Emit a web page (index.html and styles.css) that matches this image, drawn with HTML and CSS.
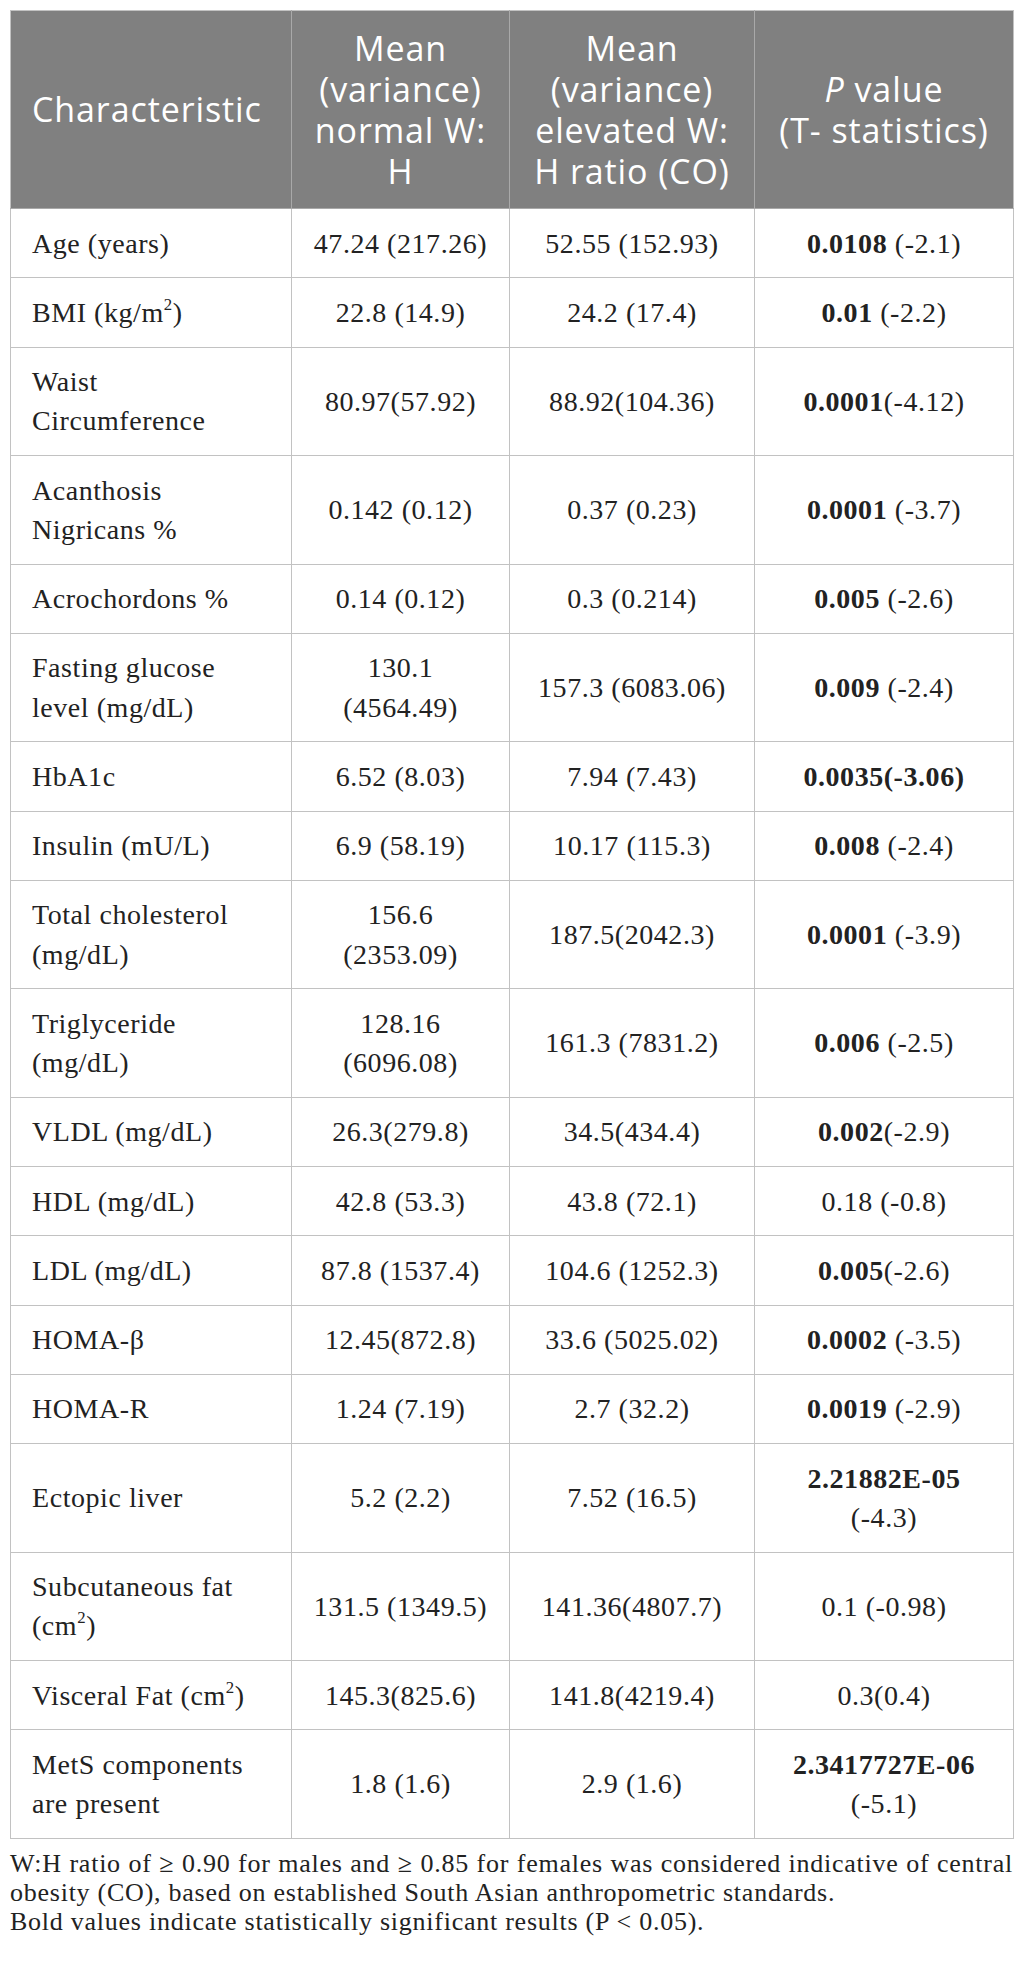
FILE: index.html
```html
<!DOCTYPE html>
<html lang="en">
<head>
<meta charset="utf-8">
<title>Characteristics by W:H ratio</title>
<link rel="stylesheet" href="styles.css">
</head>
<body>
<div class="wrap">
<table class="data">
  <colgroup>
    <col class="c1"><col class="c2"><col class="c3"><col class="c4">
  </colgroup>
  <thead>
    <tr>
      <th class="left">Characteristic</th>
      <th>Mean<br>(variance)<br>normal W:<br>H</th>
      <th>Mean<br>(variance)<br>elevated W:<br>H ratio (CO)</th>
      <th><i>P</i> value<br>(T- statistics)</th>
    </tr>
  </thead>
  <tbody>
    <tr><td class="left">Age (years)</td><td>47.24 (217.26)</td><td>52.55 (152.93)</td><td><b>0.0108</b> (-2.1)</td></tr>
    <tr><td class="left">BMI (kg/m<sup>2</sup>)</td><td>22.8 (14.9)</td><td>24.2 (17.4)</td><td><b>0.01</b> (-2.2)</td></tr>
    <tr><td class="left">Waist<br>Circumference</td><td>80.97(57.92)</td><td>88.92(104.36)</td><td><b>0.0001</b>(-4.12)</td></tr>
    <tr><td class="left">Acanthosis<br>Nigricans %</td><td>0.142 (0.12)</td><td>0.37 (0.23)</td><td><b>0.0001</b> (-3.7)</td></tr>
    <tr><td class="left">Acrochordons %</td><td>0.14 (0.12)</td><td>0.3 (0.214)</td><td><b>0.005</b> (-2.6)</td></tr>
    <tr><td class="left">Fasting glucose<br>level (mg/dL)</td><td>130.1<br>(4564.49)</td><td>157.3 (6083.06)</td><td><b>0.009</b> (-2.4)</td></tr>
    <tr><td class="left">HbA1c</td><td>6.52 (8.03)</td><td>7.94 (7.43)</td><td><b>0.0035(-3.06)</b></td></tr>
    <tr><td class="left">Insulin (mU/L)</td><td>6.9 (58.19)</td><td>10.17 (115.3)</td><td><b>0.008</b> (-2.4)</td></tr>
    <tr><td class="left">Total cholesterol<br>(mg/dL)</td><td>156.6<br>(2353.09)</td><td>187.5(2042.3)</td><td><b>0.0001</b> (-3.9)</td></tr>
    <tr><td class="left">Triglyceride<br>(mg/dL)</td><td>128.16<br>(6096.08)</td><td>161.3 (7831.2)</td><td><b>0.006</b> (-2.5)</td></tr>
    <tr><td class="left">VLDL (mg/dL)</td><td>26.3(279.8)</td><td>34.5(434.4)</td><td><b>0.002</b>(-2.9)</td></tr>
    <tr><td class="left">HDL (mg/dL)</td><td>42.8 (53.3)</td><td>43.8 (72.1)</td><td>0.18 (-0.8)</td></tr>
    <tr><td class="left">LDL (mg/dL)</td><td>87.8 (1537.4)</td><td>104.6 (1252.3)</td><td><b>0.005</b>(-2.6)</td></tr>
    <tr><td class="left">HOMA-β</td><td>12.45(872.8)</td><td>33.6 (5025.02)</td><td><b>0.0002</b> (-3.5)</td></tr>
    <tr><td class="left">HOMA-R</td><td>1.24 (7.19)</td><td>2.7 (32.2)</td><td><b>0.0019</b> (-2.9)</td></tr>
    <tr><td class="left">Ectopic liver</td><td>5.2 (2.2)</td><td>7.52 (16.5)</td><td><b>2.21882E-05</b><br>(-4.3)</td></tr>
    <tr><td class="left">Subcutaneous fat<br>(cm<sup>2</sup>)</td><td>131.5 (1349.5)</td><td>141.36(4807.7)</td><td>0.1 (-0.98)</td></tr>
    <tr><td class="left">Visceral Fat (cm<sup>2</sup>)</td><td>145.3(825.6)</td><td>141.8(4219.4)</td><td>0.3(0.4)</td></tr>
    <tr><td class="left">MetS components<br>are present</td><td>1.8 (1.6)</td><td>2.9 (1.6)</td><td><b>2.3417727E-06</b><br>(-5.1)</td></tr>
  </tbody>
</table>
<div class="notes">
  <p class="note">W:H ratio of ≥ 0.90 for males and ≥ 0.85 for females was considered indicative of central obesity (CO), based on established South Asian anthropometric standards.</p>
  <p class="note">Bold values indicate statistically significant results (P &lt; 0.05).</p>
</div>
</div>
</body>
</html>
```

FILE: styles.css
```css
html, body {
  margin: 0;
  padding: 0;
  background: #ffffff;
}

.wrap {
  padding: 10px 14px 10px 10px;
}

.data {
  width: 1003px;
  border-collapse: collapse;
  table-layout: fixed;
  border: 1px solid #c2c2c2;
}

.c1 { width: 281px; }
.c2 { width: 218px; }
.c3 { width: 245px; }
.c4 { width: 259px; }

.data th {
  background: #808080;
  color: #ffffff;
  font-family: "Open Sans", "Noto Sans", sans-serif;
  font-weight: 400;
  font-size: 34px;
  letter-spacing: 0.9px;
  line-height: 41px;
  padding: 16.5px 8px;
  text-align: center;
  vertical-align: middle;
  border: 1px solid #a9a9a9;
  border-top-color: #c2c2c2;
}

.data th.left {
  text-align: left;
  padding-left: 21px;
}

.data th:first-child { border-left-color: #c2c2c2; }
.data th:last-child { border-right-color: #c2c2c2; }

.data td {
  font-family: "Liberation Serif", "Times New Roman", serif;
  font-size: 28px;
  letter-spacing: 0.55px;
  line-height: 39.25px;
  color: #222222;
  padding: 14.5px 8px;
  text-align: center;
  vertical-align: middle;
  border: 1px solid #c2c2c2;
  white-space: nowrap;
}

.data td.left {
  text-align: left;
  padding-left: 21px;
}

.data b {
  font-weight: 700;
}

.data sup {
  font-size: 0.6em;
  line-height: 0;
  vertical-align: 0.7em;
}

.notes {
  margin-top: 10px;
  width: 1003px;
}

.note {
  margin: 0;
  font-family: "Liberation Serif", "Times New Roman", serif;
  font-size: 26px;
  letter-spacing: 0.75px;
  line-height: 29px;
  color: #222222;
  text-align: justify;
}
```
